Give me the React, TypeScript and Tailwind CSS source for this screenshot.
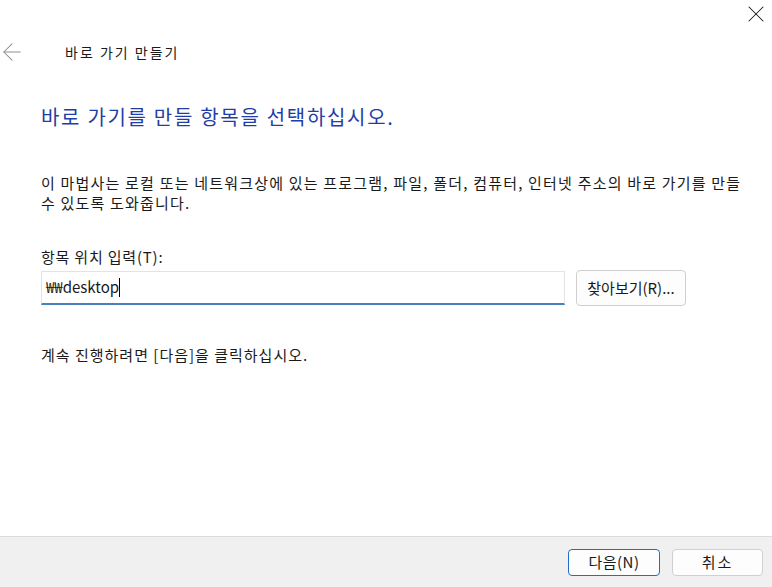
import { ArrowLeft, X } from 'lucide-react';

const font = { fontFamily: '"Noto Sans CJK KR", "Noto Sans", sans-serif' };

export default function App() {
  return (
    <div className="w-[772px] h-[587px] bg-white flex flex-col text-[#1a1a1a] overflow-hidden" style={font}>
      <div className="flex justify-end pr-[2px] h-[28px]">
        <X className="w-[28px] h-[28px] text-[#1a1a1a]" strokeWidth={0.9} />
      </div>

      <div className="flex items-center h-[48px]">
        <ArrowLeft className="-ml-[2px] w-[28px] h-[28px] text-[#8f8f8f]" strokeWidth={0.9} />
        <span className="ml-[39px] text-[14px] leading-none tracking-[2px]">바로 가기 만들기</span>
      </div>

      <div className="flex-1 pl-[41px] pr-[22px]">
        <h1 className="mt-[29px] text-[20px] leading-[24px] tracking-[1.7px] text-[#1f3ea6]">
          바로 가기를 만들 항목을 선택하십시오.
        </h1>

        <p className="mt-[44px] text-[15px] leading-[20px] tracking-[1.2px]">
          이 마법사는 로컬 또는 네트워크상에 있는 프로그램, 파일, 폴더, 컴퓨터, 인터넷 주소의 바로 가기를 만들 수 있도록 도와줍니다.
        </p>

        <label className="block mt-[35px] text-[15px] leading-[18px] tracking-[0.8px]">항목 위치 입력(T):</label>

        <div className="mt-[4px] flex items-center gap-[11px]">
          <div className="w-[524px] h-[34px] flex items-center px-[4px] border border-[#e3e3e3] border-b-2 border-b-[#4a7fc0] bg-white text-[15px]">
            <span>₩₩desktop</span>
            <span className="w-px h-[19px] bg-black" />
          </div>
          <button className="w-[110px] h-[36px] rounded-[4px] border border-[#d0d0d0] bg-[#fdfdfd] text-[15px]">
            찾아보기(R)...
          </button>
        </div>

        <p className="mt-[39px] text-[15px] leading-[20px] tracking-[1px]">계속 진행하려면 [다음]을 클릭하십시오.</p>
      </div>

      <div className="h-[51px] bg-[#f0f0f0] border-t border-[#dcdcdc] flex items-center justify-end gap-[12px] pr-[9px]">
        <button className="w-[92px] h-[27px] rounded-[4px] border border-[#1f6fc4] bg-[#fdfdfd] text-[15px] tracking-[0.5px]">다음(N)</button>
        <button className="w-[91px] h-[27px] rounded-[4px] border border-[#d0d0d0] bg-[#fdfdfd] text-[15px] tracking-[2px]">취소</button>
      </div>
    </div>
  );
}
